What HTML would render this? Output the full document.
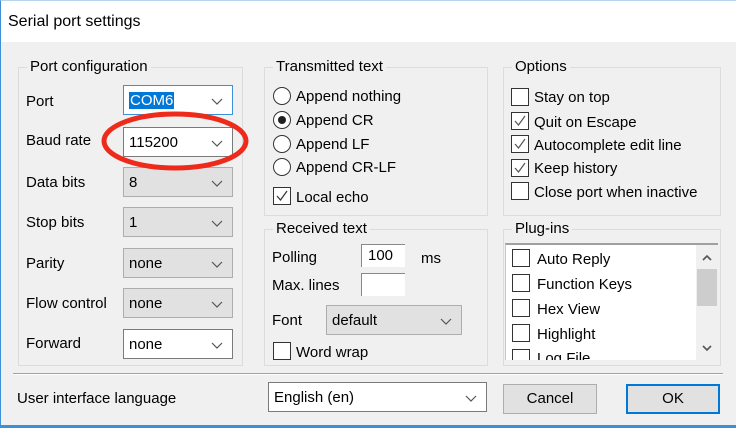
<!DOCTYPE html>
<html><head><meta charset="utf-8"><style>
*{margin:0;padding:0;box-sizing:border-box}
body{width:736px;height:428px;overflow:hidden;background:#f0f0f0;font-family:"Liberation Sans",sans-serif;font-size:15px;color:#000;position:relative}
.a{position:absolute;white-space:nowrap}
.title{left:0;top:0;width:736px;height:42px;background:#fff;border-left:1px solid #3c8fd8;border-top:1px solid #b8d4f0}
.grp{position:absolute;border:1px solid #dcdcdc}
.gl{position:absolute;top:-10px;left:8px;background:#f0f0f0;padding:0 3px;line-height:18px}
.cb{position:absolute;height:30px;border:1px solid #adadad;background:#e1e1e1;padding-left:5px;line-height:30px}
.cb.w{background:#fff;border-color:#7a7a7a}
.cb svg{position:absolute;right:9px;top:12px}
.chk{position:absolute;width:18px;height:18px;border:1px solid #333;background:#fff}
.rad{position:absolute;width:18px;height:18px;border:1px solid #333;border-radius:50%;background:#fff}
.lbl{position:absolute;line-height:20px}
</style></head><body>
<div class="a title"></div>
<div class="a" style="left:0;top:42px;width:1px;height:386px;background:#3c8fd8"></div>
<div class="a" style="left:0;top:425px;width:736px;height:3px;background:#3c8fd8"></div>
<div class="a" style="left:8px;top:12px;font-size:16px;line-height:20px">Serial port settings</div>

<div class="grp" style="left:18px;top:67px;width:225px;height:299px"><div class="gl">Port configuration</div></div>
<div class="lbl" style="left:26px;top:92px">Port</div>
<div class="lbl" style="left:26px;top:131px">Baud rate</div>
<div class="lbl" style="left:26px;top:173px">Data bits</div>
<div class="lbl" style="left:26px;top:213px">Stop bits</div>
<div class="lbl" style="left:26px;top:254px">Parity</div>
<div class="lbl" style="left:26px;top:294px">Flow control</div>
<div class="lbl" style="left:26px;top:334px">Forward</div>
<div class="cb w" style="left:123px;top:85px;width:110px;border-color:#3c8fd8"><span style="background:#0078d7;color:#fff;padding:0 1px">COM6</span><svg width="12" height="7"><path d="M1 1l5 5 5-5" fill="none" stroke="#555" stroke-width="1.2"/></svg></div>
<div class="cb w" style="left:123px;top:127px;width:110px">115200<svg width="12" height="7"><path d="M1 1l5 5 5-5" fill="none" stroke="#555" stroke-width="1.2"/></svg></div>
<div class="cb" style="left:123px;top:167px;width:110px">8<svg width="12" height="7"><path d="M1 1l5 5 5-5" fill="none" stroke="#555" stroke-width="1.2"/></svg></div>
<div class="cb" style="left:123px;top:207px;width:110px">1<svg width="12" height="7"><path d="M1 1l5 5 5-5" fill="none" stroke="#555" stroke-width="1.2"/></svg></div>
<div class="cb" style="left:123px;top:248px;width:110px">none<svg width="12" height="7"><path d="M1 1l5 5 5-5" fill="none" stroke="#555" stroke-width="1.2"/></svg></div>
<div class="cb" style="left:123px;top:288px;width:110px">none<svg width="12" height="7"><path d="M1 1l5 5 5-5" fill="none" stroke="#555" stroke-width="1.2"/></svg></div>
<div class="cb w" style="left:123px;top:329px;width:110px">none<svg width="12" height="7"><path d="M1 1l5 5 5-5" fill="none" stroke="#555" stroke-width="1.2"/></svg></div>
<svg class="a" style="left:0;top:0" width="260" height="200"><ellipse cx="175" cy="141" rx="71" ry="27" fill="none" stroke="#ee2a1a" stroke-width="5"/></svg>

<div class="grp" style="left:264px;top:67px;width:224px;height:149px"><div class="gl">Transmitted text</div></div>
<div class="rad" style="left:273px;top:87px"></div><div class="lbl" style="left:296px;top:87px">Append nothing</div>
<div class="rad" style="left:273px;top:111px"><div style="position:absolute;left:4px;top:4px;width:8px;height:8px;border-radius:50%;background:#222"></div></div><div class="lbl" style="left:296px;top:111px">Append CR</div>
<div class="rad" style="left:273px;top:135px"></div><div class="lbl" style="left:296px;top:135px">Append LF</div>
<div class="rad" style="left:273px;top:158px"></div><div class="lbl" style="left:296px;top:158px">Append CR-LF</div>
<div class="chk" style="left:273px;top:187px"><svg width="16" height="16"><path d="M3 8l3.5 4L13 3" fill="none" stroke="#333" stroke-width="1.2"/></svg></div><div class="lbl" style="left:296px;top:188px">Local echo</div>

<div class="grp" style="left:264px;top:229px;width:224px;height:137px"><div class="gl">Received text</div></div>
<div class="lbl" style="left:272px;top:248px">Polling</div>
<div class="a" style="left:361px;top:244px;width:44px;height:23px;background:#fff;border-top:1px solid #888;border-left:1px solid #888;padding-left:6px;line-height:22px">100</div>
<div class="lbl" style="left:421px;top:249px">ms</div>
<div class="lbl" style="left:272px;top:276px">Max. lines</div>
<div class="a" style="left:361px;top:273px;width:44px;height:23px;background:#fff;border-top:1px solid #888;border-left:1px solid #888"></div>
<div class="lbl" style="left:272px;top:311px">Font</div>
<div class="cb" style="left:326px;top:305px;width:136px;padding-left:5px">default<svg width="12" height="7"><path d="M1 1l5 5 5-5" fill="none" stroke="#555" stroke-width="1.2"/></svg></div>
<div class="chk" style="left:273px;top:342px"></div><div class="lbl" style="left:296px;top:343px">Word wrap</div>

<div class="grp" style="left:503px;top:67px;width:218px;height:149px"><div class="gl">Options</div></div>
<div class="chk" style="left:511px;top:88px"></div><div class="lbl" style="left:534px;top:88px">Stay on top</div>
<div class="chk" style="left:511px;top:112px"><svg width="16" height="16"><path d="M3 8l3.5 4L13 3" fill="none" stroke="#555" stroke-width="1.2"/></svg></div><div class="lbl" style="left:534px;top:113px">Quit on Escape</div>
<div class="chk" style="left:511px;top:135px"><svg width="16" height="16"><path d="M3 8l3.5 4L13 3" fill="none" stroke="#555" stroke-width="1.2"/></svg></div><div class="lbl" style="left:534px;top:136px">Autocomplete edit line</div>
<div class="chk" style="left:511px;top:159px"><svg width="16" height="16"><path d="M3 8l3.5 4L13 3" fill="none" stroke="#555" stroke-width="1.2"/></svg></div><div class="lbl" style="left:534px;top:159px">Keep history</div>
<div class="chk" style="left:511px;top:182px"></div><div class="lbl" style="left:534px;top:183px">Close port when inactive</div>

<div class="grp" style="left:503px;top:229px;width:218px;height:137px"><div class="gl">Plug-ins</div></div>
<div class="a" style="left:505px;top:243px;width:213px;height:117px;background:#fff;border-top:2px solid #a0a0a0;border-left:1px solid #c8c8c8;overflow:hidden">
 <div class="chk" style="left:6px;top:4px"></div><div class="lbl" style="left:31px;top:5px">Auto Reply</div>
 <div class="chk" style="left:6px;top:29px"></div><div class="lbl" style="left:31px;top:30px">Function Keys</div>
 <div class="chk" style="left:6px;top:54px"></div><div class="lbl" style="left:31px;top:55px">Hex View</div>
 <div class="chk" style="left:6px;top:79px"></div><div class="lbl" style="left:31px;top:80px">Highlight</div>
 <div class="chk" style="left:6px;top:104px"></div><div class="lbl" style="left:31px;top:104px">Log File</div>
 <div class="a" style="left:190px;top:0;width:22px;height:117px;background:#f0f0f0"></div>
 <div class="a" style="left:191px;top:24px;width:20px;height:37px;background:#cdcdcd"></div>
 <svg class="a" style="left:196px;top:10px" width="10" height="6"><path d="M1 5l4-4 4 4" fill="none" stroke="#555" stroke-width="1.6"/></svg>
 <svg class="a" style="left:196px;top:100px" width="10" height="6"><path d="M1 1l4 4 4-4" fill="none" stroke="#555" stroke-width="1.6"/></svg>
</div>

<div class="a" style="left:13px;top:373px;width:710px;height:1px;background:#a0a0a0"></div>
<div class="a" style="left:13px;top:374px;width:710px;height:1px;background:#fff"></div>
<div class="lbl" style="left:17px;top:389px">User interface language</div>
<div class="cb w" style="left:268px;top:382px;width:219px;height:30px">English (en)<svg width="12" height="7"><path d="M1 1l5 5 5-5" fill="none" stroke="#555" stroke-width="1.2"/></svg></div>
<div class="a" style="left:503px;top:384px;width:94px;height:30px;background:#e1e1e1;border:1px solid #adadad;text-align:center;line-height:28px">Cancel</div>
<div class="a" style="left:626px;top:384px;width:94px;height:30px;background:#e1e1e1;border:2px solid #0078d7;text-align:center;line-height:26px">OK</div>
</body></html>
